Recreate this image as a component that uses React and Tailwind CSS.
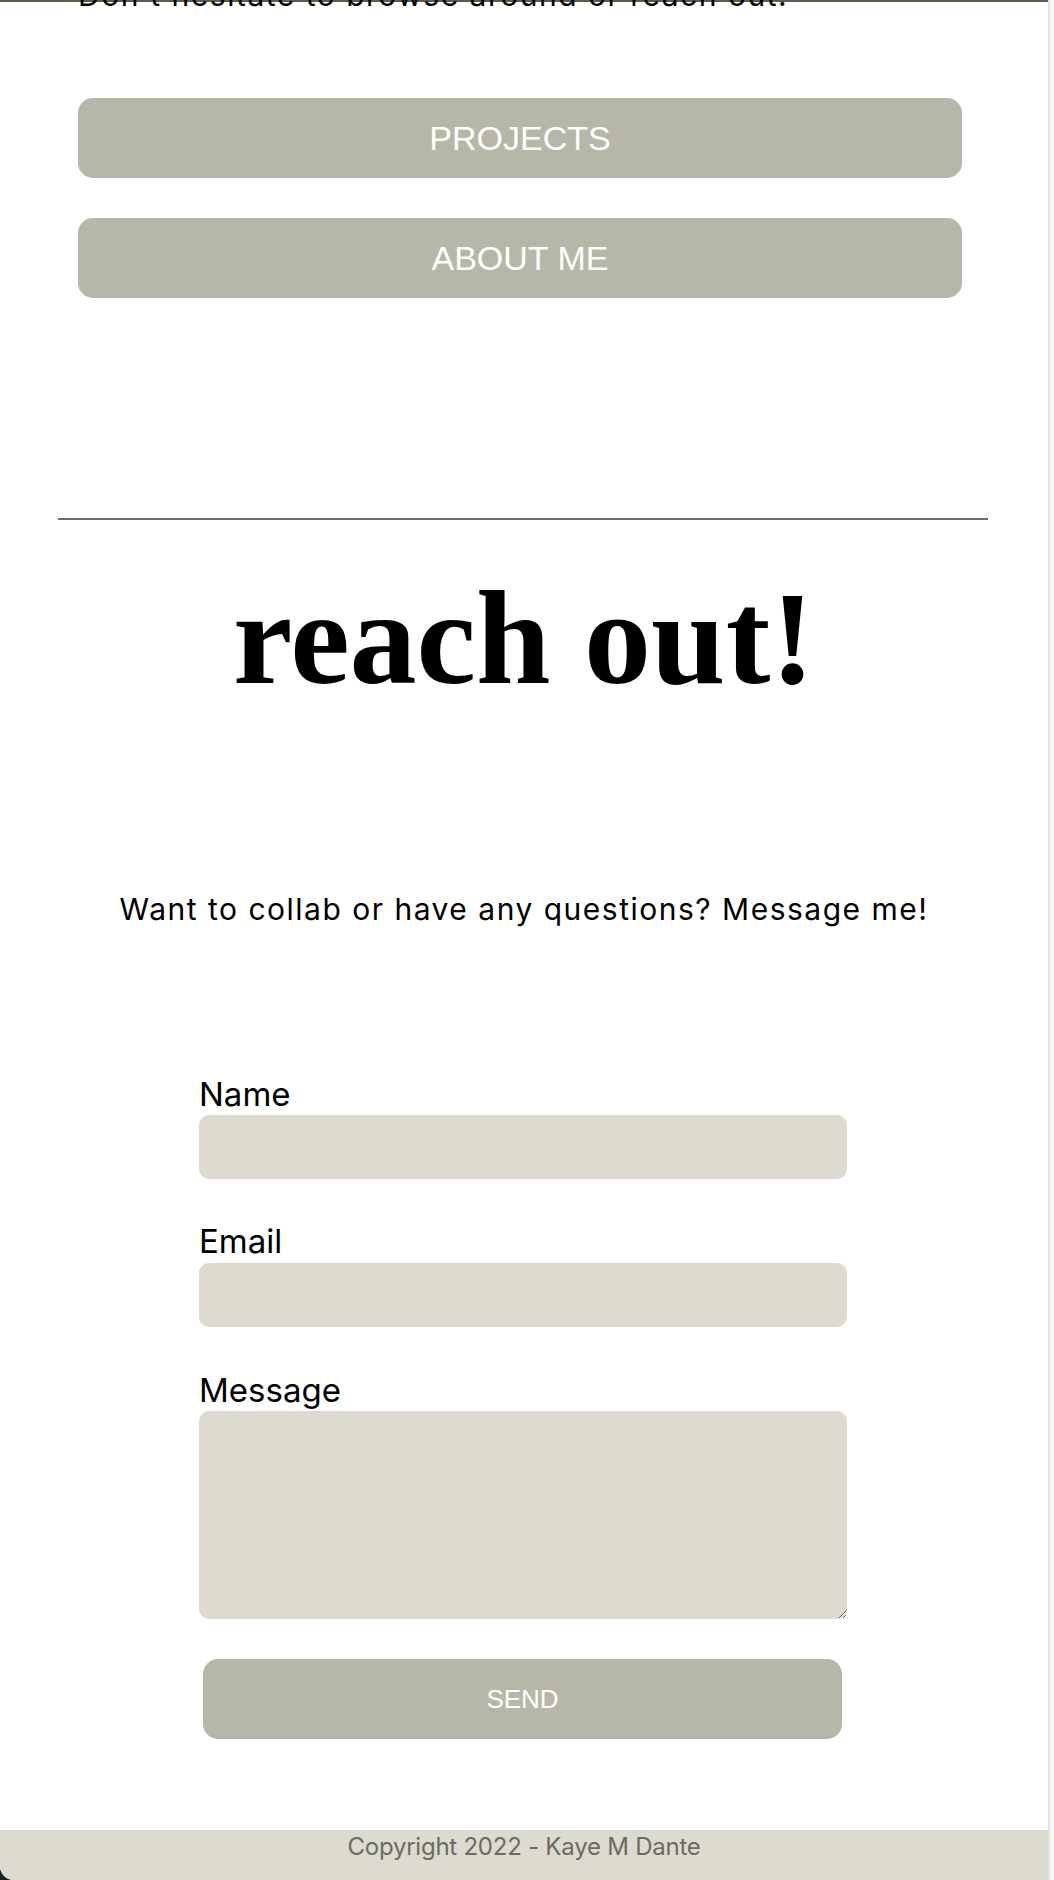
import { useState } from "react";

const sans = { fontFamily: "Inter, 'Noto Sans', sans-serif" };
const btnFont = { fontFamily: "'Liberation Sans', Arial, sans-serif" };

function NavButton({ label }) {
  return (
    <button
      style={btnFont}
      className="w-[884px] h-[80px] ml-[78px] rounded-[15px] bg-[#b6b7a8] text-white text-[34px] leading-none"
    >
      {label}
    </button>
  );
}

function Field({ label, children, top }) {
  return (
    <div className={top}>
      <label className="block text-[33px] leading-[36px] text-black">
        {label}
      </label>
      {children}
    </div>
  );
}

export default function App() {
  const [form, setForm] = useState({ name: "", email: "", message: "" });

  const update = (key) => (e) => setForm({ ...form, [key]: e.target.value });

  return (
    <div className="w-[1054px] h-[1880px] flex bg-[#1c2027] overflow-hidden" style={sans}>

      {/* PAGE */}
      <div className="w-[1048px] h-full bg-white flex flex-col overflow-hidden rounded-bl-[14px]">

        <div className="h-[2px] bg-[#5b5d4b] shrink-0" />

        {/* INTRO (scrolled) */}
        <p className="mt-[-25px] ml-[78px] text-[30px] leading-[36px] tracking-[0.05em] text-black">
          Don't hesitate to browse around or reach out!
        </p>

        <div className="mt-[85px] flex flex-col gap-[40px]">
          <NavButton label="PROJECTS" />
          <NavButton label="ABOUT ME" />
        </div>

        <hr className="mt-[220px] ml-[58px] w-[930px] border-0 h-[2px] bg-[#6e6d67]" />

        {/* CONTACT */}
        <h2
          className="mt-[43px] text-center text-[134px] leading-[150px] font-bold text-black"
          style={{ fontFamily: "'Liberation Serif', 'DejaVu Serif', serif" }}
        >
          reach out!
        </h2>

        <p className="mt-[178px] text-center text-[30px] leading-[36px] tracking-[0.05em] text-black">
          Want to collab or have any questions? Message me!
        </p>

        <form className="mt-[149px] ml-[199px] w-[648px] flex flex-col" onSubmit={(e) => e.preventDefault()}>
          <Field label="Name">
            <input
              value={form.name}
              onChange={update("name")}
              className="block mt-[3px] w-full h-[64px] rounded-[10px] bg-[#dedacf] outline-none px-3 text-[24px]"
            />
          </Field>

          <Field label="Email" top="mt-[44px]">
            <input
              value={form.email}
              onChange={update("email")}
              className="block mt-[4px] w-full h-[64px] rounded-[10px] bg-[#dedacf] outline-none px-3 text-[24px]"
            />
          </Field>

          <Field label="Message" top="mt-[45px]">
            <textarea
              value={form.message}
              onChange={update("message")}
              className="block mt-[3px] w-full h-[208px] rounded-[10px] bg-[#dedacf] outline-none p-3 text-[24px] resize-y"
            />
          </Field>

          <button
            style={btnFont}
            className="mt-[40px] ml-[4px] w-[639px] h-[80px] rounded-[15px] bg-[#b6b7a8] text-white text-[26px] leading-none"
          >
            SEND
          </button>
        </form>

        {/* FOOTER */}
        <footer className="mt-auto h-[50px] shrink-0 bg-[#dddacf] pt-[2px] text-center text-[24px] leading-[29px] tracking-[-0.01em] text-[#6b6a64]">
          Copyright 2022 - Kaye M Dante
        </footer>
      </div>

      {/* SCROLLBAR TRACK */}
      <div className="w-[6px] h-full border-l-2 border-[#e4e4e4] bg-[#f8f8f8]" />
    </div>
  );
}
